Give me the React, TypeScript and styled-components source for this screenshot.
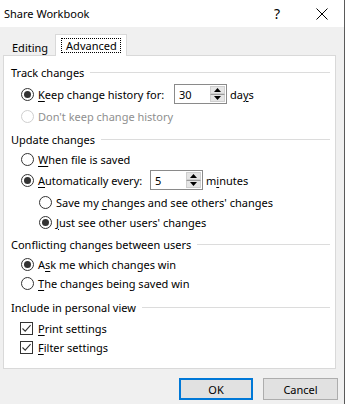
import React from "react";
import styled, { createGlobalStyle } from "styled-components";

const Global = createGlobalStyle`
  html, body { margin: 0; padding: 0; background: #f0f0f0; }
  body { font-family: "Noto Sans", "Segoe UI", sans-serif; font-size: 11px; color: #000; }
  * { box-sizing: border-box; }
`;

const Window = styled.div`
  width: 345px;
  height: 404px;
  background: #f0f0f0;
  border-right: 1px solid #5a5a5a;
  display: flex;
  flex-direction: column;
`;

const TitleBar = styled.div`
  height: 27px;
  background: #fff;
  display: flex;
  align-items: center;
  padding-left: 4px;
  font-size: 11px;
`;

const Title = styled.div`
  flex: 1;
`;

const Help = styled.div`
  width: 12px;
  text-align: center;
  font-size: 14px;
  margin-right: 33px;
  line-height: 1;
`;

const Close = styled.div`
  width: 12px;
  height: 12px;
  display: flex;
  align-items: center;
  justify-content: center;
  margin-right: 16px;
`;

const TabStrip = styled.div`
  height: 28px;
  display: flex;
  align-items: flex-end;
  padding-left: 6px;
`;

const Tab = styled.div<{ $active?: boolean }>`
  position: relative;
  z-index: 1;
  height: ${(p) => (p.$active ? 22 : 19)}px;
  margin-bottom: ${(p) => (p.$active ? -1 : 0)}px;
  padding: ${(p) => (p.$active ? "3px 5px 0 5px" : "3px 6px 0 5px")};
  background: ${(p) => (p.$active ? "#fff" : "transparent")};
  border: 1px solid ${(p) => (p.$active ? "#d9d9d9" : "transparent")};
  border-bottom: none;
  display: flex;
  align-items: flex-start;
`;

const TabLabel = styled.span<{ $focus?: boolean }>`
  display: inline-block;
  line-height: 13px;
  padding: ${(p) => (p.$focus ? "0 3px 0 4px" : "1px 0 0 0")};
  border: ${(p) => (p.$focus ? "1px dotted #000" : "none")};
`;

const Panel = styled.div`
  margin-left: 3px;
  width: 333px;
  height: 314px;
  background: #fff;
  border: 1px solid #d9d9d9;
  padding: 8px 5px 0 7px;
  display: flex;
  flex-direction: column;
`;

const Header = styled.div<{ $mt?: number }>`
  height: 16px;
  margin-top: ${(p) => p.$mt ?? 0}px;
  display: flex;
  align-items: center;
`;

const HeaderLine = styled.div`
  flex: 1;
  height: 1px;
  background: #dcdcdc;
  margin-left: 6px;
`;

const Row = styled.div<{ $h: number; $mt?: number; $indent: number; $disabled?: boolean }>`
  height: ${(p) => p.$h}px;
  margin-top: ${(p) => p.$mt ?? 0}px;
  padding-left: ${(p) => p.$indent}px;
  display: flex;
  align-items: center;
  gap: 4px;
  color: ${(p) => (p.$disabled ? "#8f8f8f" : "#000")};
  white-space: nowrap;
`;

const RadioCircle = styled.span<{ $checked?: boolean; $disabled?: boolean }>`
  width: 13px;
  height: 13px;
  border-radius: 50%;
  border: 1px solid ${(p) => (p.$disabled ? "#cfcfcf" : "#333")};
  background: #fff;
  display: flex;
  align-items: center;
  justify-content: center;
  flex: none;
  &::after {
    content: "";
    display: ${(p) => (p.$checked ? "block" : "none")};
    width: 7px;
    height: 7px;
    border-radius: 50%;
    background: #333;
  }
`;

const CheckBox = styled.span`
  width: 13px;
  height: 13px;
  border: 1px solid #333;
  background: #fff;
  display: flex;
  align-items: center;
  justify-content: center;
  flex: none;
  margin-right: 1px;
`;

const Label = styled.span<{ $w?: number }>`
  display: inline-block;
  width: ${(p) => (p.$w ? `${p.$w}px` : "auto")};
`;

const Key = styled.u`
  text-decoration: underline;
  text-underline-offset: 2px;
`;

const Spin = styled.div`
  width: 53px;
  height: 20px;
  border: 1px solid #8a8a8a;
  background: #fff;
  display: flex;
  align-items: stretch;
  margin-right: -1px;
`;

const SpinValue = styled.div`
  flex: 1;
  padding-left: 4px;
  display: flex;
  align-items: center;
`;

const SpinButtons = styled.div`
  width: 16px;
  padding: 1px 1px 1px 0;
  display: flex;
  flex-direction: column;
`;

const SpinButton = styled.div`
  flex: 1;
  background: #e5e5e5;
  border: 1px solid #cfcfcf;
  display: flex;
  align-items: center;
  justify-content: center;
  & + & { border-top: 1px solid #9a9a9a; }
`;

const Footer = styled.div`
  display: flex;
  justify-content: flex-end;
  gap: 10px;
  padding: 9px 6px 0 0;
`;

const Button = styled.div<{ $primary?: boolean }>`
  width: ${(p) => (p.$primary ? 74 : 75)}px;
  height: 22px;
  background: #e1e1e1;
  border: ${(p) => (p.$primary ? "2px solid #0078d7" : "1px solid #adadad")};
  display: flex;
  align-items: center;
  justify-content: center;
`;

const Radio = ({ checked, disabled }: { checked?: boolean; disabled?: boolean }) => (
  <RadioCircle $checked={checked} $disabled={disabled} />
);

const Check = () => (
  <CheckBox>
    <svg width="11" height="11" viewBox="0 0 11 11">
      <path d="M1.5 5.5 L4.2 8.2 L9.6 2.2" fill="none" stroke="#333" strokeWidth="1.1" />
    </svg>
  </CheckBox>
);

const Spinner = ({ value }: { value: string }) => (
  <Spin>
    <SpinValue>{value}</SpinValue>
    <SpinButtons>
      <SpinButton>
        <svg width="7" height="4" viewBox="0 0 7 4">
          <path d="M0 4 L3.5 0 L7 4 Z" fill="#000" />
        </svg>
      </SpinButton>
      <SpinButton>
        <svg width="7" height="4" viewBox="0 0 7 4">
          <path d="M0 0 L3.5 4 L7 0 Z" fill="#000" />
        </svg>
      </SpinButton>
    </SpinButtons>
  </Spin>
);

export default function App() {
  return (
    <>
      <Global />
      <Window>
        <TitleBar>
          <Title>Share Workbook</Title>
          <Help>?</Help>
          <Close>
            <svg width="12" height="12" viewBox="0 0 12 12">
              <path d="M0.5 0.5 L11.5 11.5 M11.5 0.5 L0.5 11.5" stroke="#000" strokeWidth="1" />
            </svg>
          </Close>
        </TitleBar>
        <TabStrip>
          <Tab>
            <TabLabel>Editing</TabLabel>
          </Tab>
          <Tab $active>
            <TabLabel $focus>Advanced</TabLabel>
          </Tab>
        </TabStrip>
        <Panel>
          <Header>
            Track changes
            <HeaderLine />
          </Header>
          <Row $h={22} $mt={3} $indent={10}>
            <Radio checked />
            <Label $w={132}>
              <Key>K</Key>eep change history for:
            </Label>
            <Spinner value="30" />
            <Label>
              da<Key>y</Key>s
            </Label>
          </Row>
          <Row $h={22} $indent={10} $disabled>
            <Radio disabled />
            <Label>Don't keep change history</Label>
          </Row>

          <Header $mt={4}>
            Update changes
            <HeaderLine />
          </Header>
          <Row $h={20} $mt={2} $indent={10}>
            <Radio />
            <Label>
              <Key>W</Key>hen file is saved
            </Label>
          </Row>
          <Row $h={22} $indent={10}>
            <Radio checked />
            <Label $w={108}>
              <Key>A</Key>utomatically every:
            </Label>
            <Spinner value="5" />
            <Label>
              m<Key>i</Key>nutes
            </Label>
          </Row>
          <Row $h={22} $indent={28}>
            <Radio />
            <Label>
              Save my <Key>c</Key>hanges and see others' changes
            </Label>
          </Row>
          <Row $h={18} $indent={28}>
            <Radio checked />
            <Label>
              <Key>J</Key>ust see other users' changes
            </Label>
          </Row>

          <Header $mt={5}>
            Conflicting changes between users
            <HeaderLine />
          </Header>
          <Row $h={20} $mt={2} $indent={10}>
            <Radio checked />
            <Label>
              A<Key>s</Key>k me which changes win
            </Label>
          </Row>
          <Row $h={18} $indent={10}>
            <Radio />
            <Label>
              <Key>T</Key>he changes being saved win
            </Label>
          </Row>

          <Header $mt={7}>
            Include in personal view
            <HeaderLine />
          </Header>
          <Row $h={20} $mt={3} $indent={9}>
            <Check />
            <Label>
              <Key>P</Key>rint settings
            </Label>
          </Row>
          <Row $h={18} $indent={9}>
            <Check />
            <Label>
              <Key>F</Key>ilter settings
            </Label>
          </Row>
        </Panel>
        <Footer>
          <Button $primary>OK</Button>
          <Button>Cancel</Button>
        </Footer>
      </Window>
    </>
  );
}
